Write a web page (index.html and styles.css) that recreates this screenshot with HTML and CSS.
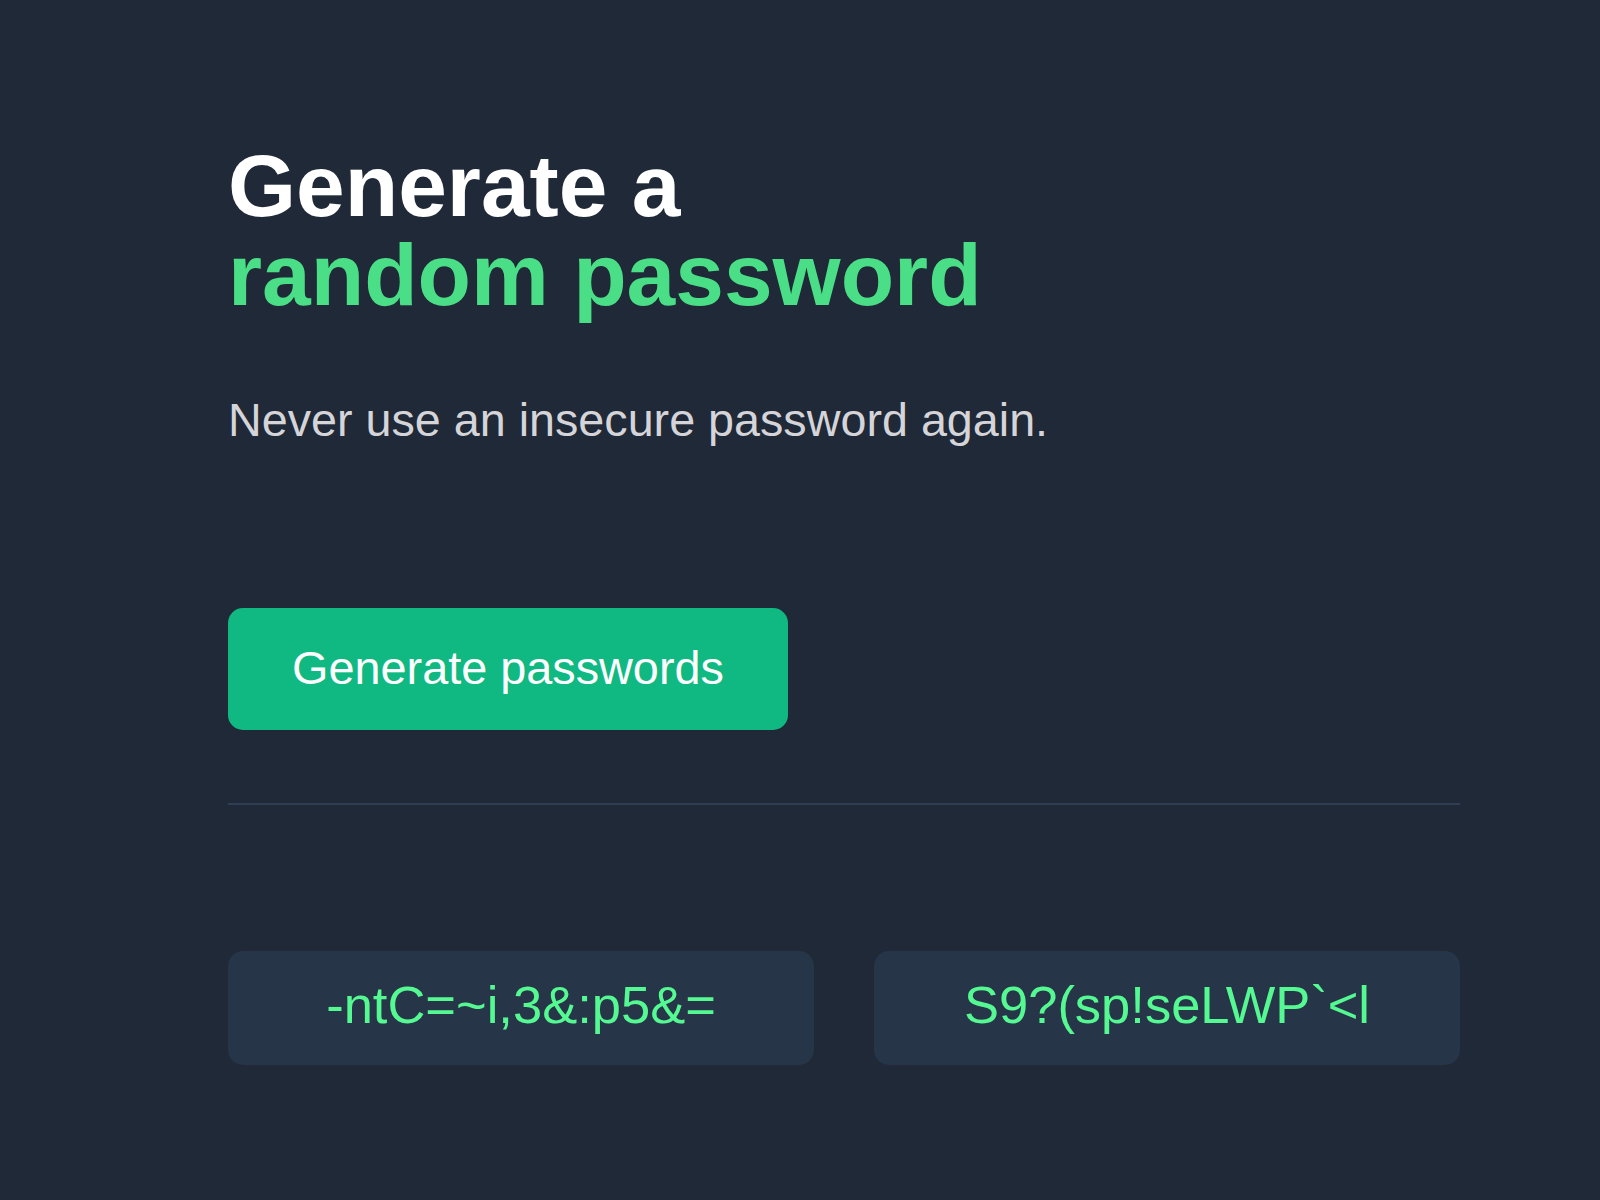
FILE: index.html
```html
<!DOCTYPE html>
<html lang="en">
<head>
<meta charset="utf-8">
<title>Password Generator</title>
<link rel="stylesheet" href="styles.css">
</head>
<body>
<main class="generator">
  <h1 class="title">Generate a<br><span class="accent">random password</span></h1>
  <p class="subtitle">Never use an insecure password again.</p>
  <button class="generate-btn" type="button">Generate passwords</button>
  <hr class="divider">
  <div class="passwords">
    <div class="password">-ntC=~i,3&amp;:p5&amp;=</div>
    <div class="password">S9?(sp!seLWP`&lt;l</div>
  </div>
</main>
</body>
</html>
```
FILE: styles.css
```css
html, body {
  margin: 0;
  padding: 0;
  background: #1f2937;
}

body {
  font-family: "Liberation Sans", Arial, sans-serif;
  width: 1600px;
  height: 1200px;
  overflow: hidden;
}

.generator {
  display: flex;
  flex-direction: column;
  align-items: flex-start;
  width: 1232px;
  padding: 142px 0 0 228px;
}

.title {
  margin: 0;
  font-size: 87.5px;
  line-height: 89px;
  font-weight: 700;
  color: #ffffff;
}

.accent {
  color: #4adf86;
}

.subtitle {
  margin: 73px 0 0;
  font-size: 46.7px;
  line-height: 54px;
  color: #d5d4d8;
}

.generate-btn {
  margin-top: 161px;
  width: 560px;
  height: 122px;
  padding: 0 0 2px;
  border: none;
  border-radius: 15px;
  background: #10b981;
  color: #ffffff;
  font-family: "Liberation Sans", Arial, sans-serif;
  font-size: 46.8px;
  line-height: 120px;
  text-align: center;
  cursor: pointer;
}

.divider {
  align-self: stretch;
  margin: 73px 0 0;
  height: 2px;
  border: none;
  background: #2f3e53;
}

.passwords {
  align-self: stretch;
  display: grid;
  grid-template-columns: 1fr 1fr;
  gap: 60px;
  margin-top: 146px;
}

.password {
  height: 114px;
  box-sizing: border-box;
  padding: 0 0 7px;
  border-radius: 15px;
  background: #273549;
  color: #55f991;
  font-size: 52.5px;
  line-height: 107px;
  text-align: center;
  white-space: nowrap;
}
```
